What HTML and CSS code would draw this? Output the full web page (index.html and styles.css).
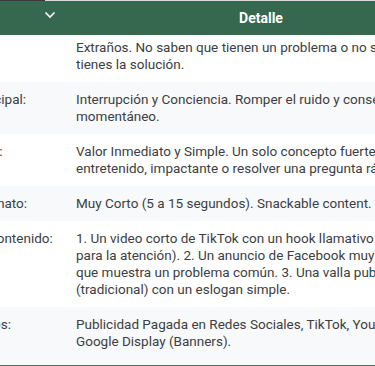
FILE: index.html
```html
<!DOCTYPE html>
<html lang="es">
<head>
<meta charset="utf-8">
<link rel="stylesheet" href="styles.css">
</head>
<body>
<div class="topline"></div>
<div class="table-wrap">
<table class="grid">
<colgroup><col class="col-label"><col class="col-detail"></colgroup>
<thead>
<tr>
<th class="th-label">Aspecto <svg class="chev" width="12" height="8" viewBox="0 0 12 8"><path d="M1.5 1.5 L6 6 L10.5 1.5" fill="none" stroke="#fff" stroke-width="1.6"/></svg></th>
<th class="th-detail">Detalle</th>
</tr>
</thead>
<tbody>
<tr class="first">
<td class="label">Audiencia:</td>
<td>Extraños. No saben que tienen un problema o no saben que tienes la solución.</td>
</tr>
<tr>
<td class="label">Objetivo Principal:</td>
<td>Interrupción y Conciencia. Romper el ruido y conseguir un clic momentáneo.</td>
</tr>
<tr>
<td class="label">Mensaje Vital:</td>
<td>Valor Inmediato y Simple. Un solo concepto fuerte, ya sea entretenido, impactante o resolver una pregunta rápida.</td>
</tr>
<tr>
<td class="label">Tipos de Formato:</td>
<td>Muy Corto (5 a 15 segundos). Snackable content.</td>
</tr>
<tr>
<td class="label">Ejemplo de Contenido:</td>
<td>1. Un video corto de TikTok con un hook llamativo (esencial para la atención). 2. Un anuncio de Facebook muy emocional que muestra un problema común. 3. Una valla publicitaria (tradicional) con un eslogan simple.</td>
</tr>
<tr class="last">
<td class="label">Canales Pagos:</td>
<td>Publicidad Pagada en Redes Sociales, TikTok, YouTube, Google Display (Banners).</td>
</tr>
</tbody>
</table>
</div>
</body>
</html>
```
FILE: styles.css
```css
html, body {
  margin: 0;
  padding: 0;
  background: #ffffff;
  overflow: hidden;
}
body {
  font-family: Roboto, "Liberation Sans", Arial, sans-serif;
}
.topline {
  height: 1px;
  background: linear-gradient(to right, #3a3a3a 0 45px, #d9d9d9 45px);
}
.table-wrap {
  overflow: hidden;
  width: 375px;
}
.grid {
  border-collapse: collapse;
  table-layout: fixed;
  width: 552px;
  margin-left: -94px;
  border-bottom: 4px solid #56705f;
}
.col-label { width: 158px; }
.col-detail { width: 394px; }
.grid th {
  background: #35684f;
  color: #ffffff;
  font-weight: 700;
  font-size: 14px;
  height: 34px;
  padding: 0 12px;
  vertical-align: middle;
}
.th-label {
  position: relative;
  text-align: left;
}
.th-detail {
  text-align: center;
  padding-right: 58px;
}
.chev {
  position: absolute;
  right: 8px;
  top: 10px;
}
.grid td {
  padding: 9px 12px;
  vertical-align: top;
  font-size: 13.5px;
  line-height: 17px;
  color: #3c4043;
}
.grid td.label {
  padding-right: 4px;
  white-space: nowrap;
}
.grid tbody tr:nth-child(even) td {
  background: #f8f9fa;
}
.grid tr.last td {
  padding-bottom: 15px;
  border-bottom: 3px solid #e6e8e8;
}
.grid tr.first td {
  padding-top: 4px;
}
```
